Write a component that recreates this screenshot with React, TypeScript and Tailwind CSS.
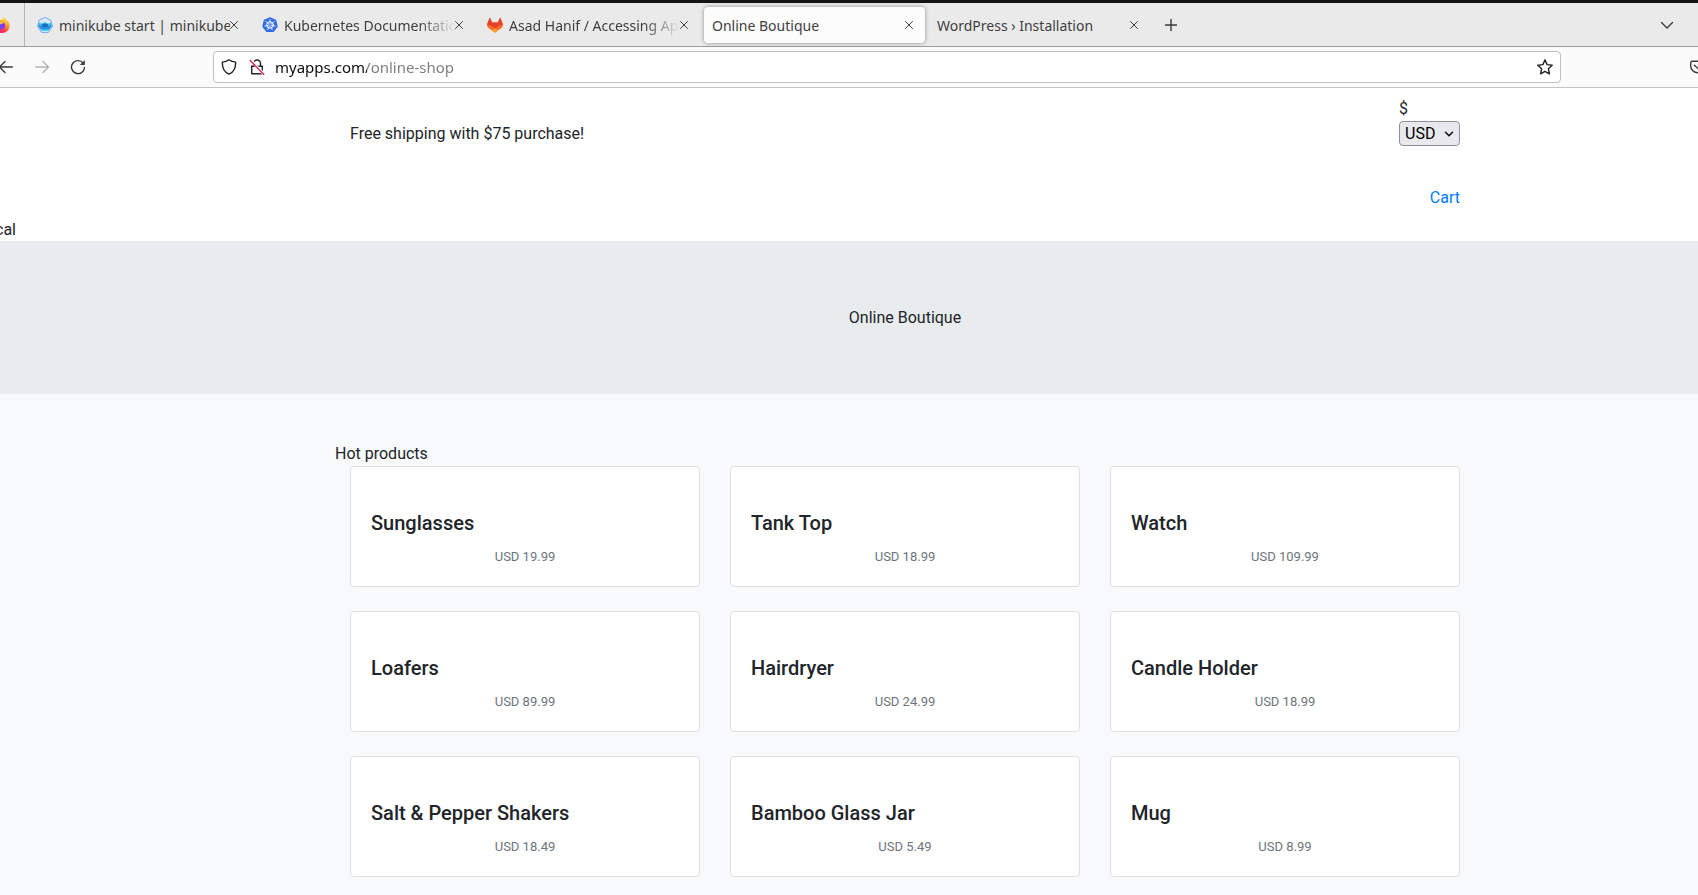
import React from 'react';

type IconProps = { className?: string };

const MinikubeIcon = () => (
  <svg viewBox="0 0 16 16" className="size-4 shrink-0" aria-hidden="true">
    <path d="M8 .5 13.800 3.200 15.500 9.400 11.500 15.400H4.500L.5 9.400 2.200 3.200Z" fill="#dcebfc" stroke="#7ba3ec" strokeWidth="1" strokeLinejoin="round" />
    <path d="M1.900 5.400 4.300 6.600H6l1.200-1.300h1.600L10 6.600h1.700l2.400-1.200.4 4-3.400 4.700H4.900L1.500 9.400Z" fill="#35c3ea" />
    <path d="M1.700 7.600 4.500 9h7l2.800-1.400.2 1.800-3 3.700h-7l-3-3.700Z" fill="#2b7be0" opacity=".75" />
    <path d="M5 6.800h6v2.400l-1 .8H6l-1-.8Z" fill="#1c6fc4" />
    <path d="M4.300 11.700 6 12.400h4l1.700-.7-1.200 2.300h-5Z" fill="#35dcee" />
  </svg>
);

const KubernetesIcon = () => (
  <svg viewBox="0 0 16 16" className="size-4 shrink-0" aria-hidden="true">
    <path d="M8 .9 13.600 3.500 15 9.500 11.200 14.400H4.800L1 9.500 2.400 3.500Z" fill="#326ce5" stroke="#326ce5" strokeWidth="1.400" strokeLinejoin="round" />
    <g stroke="#fff" fill="none" strokeLinecap="round">
      <circle cx="8" cy="7.900" r="3.300" strokeWidth="1" />
      <path d="M8 7.900V2.600M8 7.900l4.200-3.300M8 7.900l5.200 1.200M8 7.900l2.300 4.800M8 7.900l-2.300 4.800M8 7.900 2.800 9.100M8 7.900 3.800 4.600" strokeWidth=".8" />
    </g>
    <circle cx="8" cy="7.900" r="1" fill="#326ce5" />
  </svg>
);

const GitlabIcon = () => (
  <svg viewBox="0 0 16 16" className="size-4 shrink-0" aria-hidden="true">
    <path d="M8 15.700 15.400 10.200 15.800 7 13.200.4 10.800 5.600H5.200L2.800.4.2 7l.4 3.200Z" fill="#fc6d26" />
    <path d="M2.800.4 5.200 5.600h5.600L13.200.4 15.800 7l-.1 1.500c-2-.4-4 .1-5.200 1.200L8 11.600 5.500 9.700C4.300 8.600 2.300 8.100.3 8.500L.2 7Z" fill="#e24329" />
    <path d="M8 11.600 10.800 13.600 8 15.700 5.200 13.600Z" fill="#fca326" />
  </svg>
);

const FirefoxIcon = () => (
  <svg viewBox="0 0 16 16" className="size-4 shrink-0" aria-hidden="true">
    <defs>
      <linearGradient id="flame" x1=".8" y1="0" x2=".3" y2="1">
        <stop offset="0" stopColor="#fff44f" />
        <stop offset=".4" stopColor="#ffa02e" />
        <stop offset=".75" stopColor="#ff3750" />
        <stop offset="1" stopColor="#e31587" />
      </linearGradient>
    </defs>
    <path d="M10.200.3c2 1.500 2.500 2.700 2.900 3.800.5-.2.700-.6.700-.6 1.200 1.600 1.900 3.200 1.900 5C15.700 12.700 12.300 16 8 16S.3 12.700.3 8.500C.3 6 1.500 4 2.800 2.600c2.800.6 5.800.6 7.400-2.300Z" fill="url(#flame)" />
    <circle cx="7.500" cy="8.600" r="3.600" fill="#7a3ff0" />
    <path d="M3.800 6.300C5.300 4.300 9 4.600 10 6.200 8.300 5.900 8 7 6.500 7.200 5 7.300 4.500 7 3.800 6.300Z" fill="#ffbd4f" />
  </svg>
);

const CloseIcon = () => (
  <svg viewBox="0 0 8 8" className="size-2" fill="none" stroke="#3f3f3f" strokeWidth="1" strokeLinecap="round" aria-hidden="true">
    <path d="m.5.5 7 7m0-7-7 7" />
  </svg>
);

const ArrowIcon = ({ className = '' }: IconProps) => (
  <svg viewBox="0 0 16 16" className={'size-4 ' + className} fill="none" stroke="currentColor" strokeWidth="1.400" strokeLinecap="round" strokeLinejoin="round" aria-hidden="true">
    <path d="M14.300 8H1.500M7 2.500 1.500 8 7 13.500" />
  </svg>
);

const ReloadIcon = () => (
  <svg viewBox="0 0 16 16" className="size-4" fill="none" stroke="#3a3a3a" strokeWidth="1.400" strokeLinecap="round" aria-hidden="true">
    <path d="M13.200 4.200A6.500 6.500 0 1 0 14.500 8.500" />
    <path d="M14.800 1v5h-5Z" fill="#3a3a3a" stroke="none" />
  </svg>
);

const ShieldIcon = () => (
  <svg viewBox="0 0 16 16" className="size-4 shrink-0" fill="none" stroke="#222" strokeWidth="1.400" strokeLinejoin="round" aria-hidden="true">
    <path d="M8 .8c1.900 1.400 4 2.100 6.600 2.300.3 5.400-1.500 9.800-6.600 12.100C2.900 12.900 1.100 8.500 1.400 3.100 4 2.900 6.100 2.200 8 .8Z" />
  </svg>
);

const InsecureLockIcon = () => (
  <svg viewBox="0 0 16 16" className="size-4 shrink-0" fill="none" stroke="#222" strokeWidth="1.400" strokeLinejoin="round" aria-hidden="true">
    <path d="M4.500 7V4.500a3.500 3.500 0 0 1 7 0V7M2.700 7.200h10.600v7.600H2.700Z" />
    <path d="M1.600 1.200 15 15.300" stroke="#fff" strokeWidth="3" />
    <path d="M1.200 1.500 14.800 15.500" stroke="#e8194f" strokeWidth="1.300" strokeLinecap="round" />
  </svg>
);

const StarIcon = () => (
  <svg viewBox="0 0 16 16" className="size-4" fill="none" stroke="#222" strokeWidth="1.400" strokeLinejoin="round" aria-hidden="true">
    <path d="m8 .9 2.100 4.700 5.100.6-3.800 3.500 1 5.100L8 12.300l-4.400 2.500 1-5.100L.8 6.200l5.100-.6Z" />
  </svg>
);

const PocketIcon = () => (
  <svg viewBox="0 0 16 16" className="size-4" fill="none" stroke="#3a3a3a" strokeWidth="1.400" strokeLinecap="round" strokeLinejoin="round" aria-hidden="true">
    <path d="M2.200 2.300h11.600A1.500 1.500 0 0 1 15.300 3.800V7a7.300 6.800 0 0 1-14.600 0V3.800A1.500 1.500 0 0 1 2.200 2.300Z" />
    <path d="M4.500 6.300 8 9.600l3.500-3.300" />
  </svg>
);

const tabs = [
  { title: 'minikube start | minikube', icon: <MinikubeIcon />, active: false, fades: false },
  { title: 'Kubernetes Documentation', icon: <KubernetesIcon />, active: false, fades: true },
  { title: 'Asad Hanif / Accessing Apps', icon: <GitlabIcon />, active: false, fades: true },
  { title: 'Online Boutique', icon: null, active: true, fades: false },
  { title: 'WordPress › Installation', icon: null, active: false, fades: false },
];

const products = [
  { name: 'Sunglasses', price: 'USD 19.99' },
  { name: 'Tank Top', price: 'USD 18.99' },
  { name: 'Watch', price: 'USD 109.99' },
  { name: 'Loafers', price: 'USD 89.99' },
  { name: 'Hairdryer', price: 'USD 24.99' },
  { name: 'Candle Holder', price: 'USD 18.99' },
  { name: 'Salt & Pepper Shakers', price: 'USD 18.49' },
  { name: 'Bamboo Glass Jar', price: 'USD 5.49' },
  { name: 'Mug', price: 'USD 8.99' },
];

function TabStrip() {
  return (
    <div className="flex h-11 items-center border-b border-[#9c9c9c] bg-[#eaeaea] pr-5">
      <button aria-label="Firefox" className="-ml-1.5 flex h-full w-[31px] shrink-0 items-center border-r border-[#b4b4b4]">
        <FirefoxIcon />
      </button>
      <div className="flex items-center pl-0.5" role="tablist">
        {tabs.map((tab) => (
          <div
            key={tab.title}
            className={
              'mx-0.5 flex h-9 w-[221px] items-center rounded pr-3 pl-2 text-[#3f3f3f] ' +
              (tab.active ? 'bg-[#fcfcfc] shadow-[0_0_4px_rgba(0,0,0,0.4)]' : '')
            }
          >
            <button
              role="tab"
              aria-selected={tab.active}
              className={
                'flex min-w-0 flex-1 items-center gap-1.5 overflow-hidden whitespace-nowrap ' +
                (tab.fades ? '[mask-image:linear-gradient(90deg,#000_calc(100%-36px),transparent)]' : '')
              }
            >
              {tab.icon}
              <span className="pt-0.5 text-sm">{tab.title}</span>
            </button>
            <button aria-label={'Close ' + tab.title} className="shrink-0">
              <CloseIcon />
            </button>
          </div>
        ))}
      </div>
      <button aria-label="New tab" className="ml-3">
        <svg viewBox="0 0 14 14" className="size-3.5" stroke="#3a3a3a" strokeWidth="1.400" strokeLinecap="round" aria-hidden="true">
          <path d="M7 1.500v11M1.500 7h11" />
        </svg>
      </button>
      <button aria-label="List all tabs" className="ml-auto pr-1">
        <svg viewBox="0 0 14 14" className="size-3.5" fill="none" stroke="#3a3a3a" strokeWidth="1.400" strokeLinecap="round" strokeLinejoin="round" aria-hidden="true">
          <path d="m1.500 4.500 5.500 5.500 5.500-5.500" />
        </svg>
      </button>
    </div>
  );
}

function Toolbar() {
  return (
    <div className="flex h-[41px] items-center overflow-hidden border-b border-[#c4c4c4] bg-[#fbfbfb]">
      <div className="flex w-[213px] shrink-0 items-center gap-5">
        <button aria-label="Back" className="-ml-0.5 text-[#3a3a3a]">
          <ArrowIcon />
        </button>
        <button aria-label="Forward" className="text-[#b0b0b0]">
          <ArrowIcon className="rotate-180" />
        </button>
        <button aria-label="Reload">
          <ReloadIcon />
        </button>
      </div>
      <div className="flex h-8 flex-1 items-center rounded border border-[#c0c0c0] bg-white px-[7px]">
        <div className="flex gap-3">
          <ShieldIcon />
          <InsecureLockIcon />
        </div>
        <input
          aria-label="Address"
          defaultValue="myapps.com/online-shop"
          className="ml-2.5 min-w-0 flex-1 bg-[linear-gradient(90deg,#0c0c0c_92px,#7b7b7b_92px)] bg-clip-text text-[15px] text-transparent outline-none"
        />
        <button aria-label="Bookmark">
          <StarIcon />
        </button>
      </div>
      <button aria-label="Save to Pocket" className="-mr-2 ml-[129px] shrink-0">
        <PocketIcon />
      </button>
    </div>
  );
}

function ShopHeader() {
  return (
    <header>
      <div className="pt-[9px] pl-28">
        <div className="mx-auto flex max-w-[1110px] items-center justify-between">
          <span>Free shipping with $75 purchase!</span>
          <div className="flex flex-col pb-6">
            <label htmlFor="currency">$</label>
            <div className="relative">
              <select
                id="currency"
                defaultValue="USD"
                className="block h-[25px] w-[61px] appearance-none rounded border border-[#8f8f9d] bg-[#e9e9ed] pl-[5px] text-base leading-5 text-black"
              >
                <option>USD</option>
                <option>EUR</option>
                <option>CAD</option>
                <option>JPY</option>
                <option>GBP</option>
                <option>TRY</option>
              </select>
              <svg viewBox="0 0 10 10" className="pointer-events-none absolute top-2 right-1.5 size-2.5" fill="none" stroke="#111" strokeWidth="1.600" strokeLinecap="round" strokeLinejoin="round" aria-hidden="true">
                <path d="m1.500 3.300 3.500 3.500 3.500-3.500" />
              </svg>
            </div>
          </div>
        </div>
        <nav className="mx-auto flex max-w-[1110px] justify-end pt-4 pb-2">
          <a href="#cart" className="text-[#007bff]">Cart</a>
        </nav>
      </div>
      <p className="-ml-[5px] leading-[23px]">cal</p>
    </header>
  );
}

export default function App() {
  return (
    <div className="overflow-hidden bg-[#f8f9fa] font-['Roboto',sans-serif] text-base text-[#212529]">
      <div className="border-t-[3px] border-[#141414] font-['Noto_Sans',sans-serif]">
        <TabStrip />
        <Toolbar />
      </div>
      <div className="bg-white">
        <ShopHeader />
      </div>
      <main>
        <section className="bg-[#e9ecef] pt-[65px] pb-16 pl-28 text-center">
          <h1>Online Boutique</h1>
        </section>
        <section className="pt-12 pl-28">
          <div className="mx-auto max-w-[1110px]">
            <h2 className="-ml-[15px]">Hot products</h2>
            <div className="grid grid-cols-3 gap-x-[30px] gap-y-6 pb-6">
              {products.map((product) => (
                <article key={product.name} className="rounded border border-[#dfdfdf] bg-white px-5 pt-11 pb-5">
                  <h3 className="mb-3 text-xl leading-6 font-medium">{product.name}</h3>
                  <p className="text-center text-[13px] leading-[19px] text-[#6c757d]">{product.price}</p>
                </article>
              ))}
            </div>
          </div>
        </section>
      </main>
    </div>
  );
}
